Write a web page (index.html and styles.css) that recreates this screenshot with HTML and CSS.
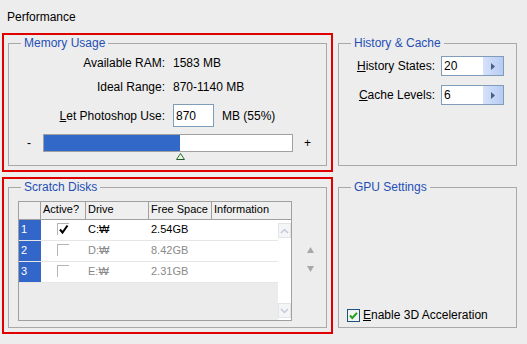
FILE: index.html
```html
<!DOCTYPE html>
<html lang="en">
<head>
    <meta charset="UTF-8">
    <title>Performance</title>
    <link rel="stylesheet" href="styles.css">
</head>
<body>
    <div class="title">Performance</div>

    <div class="panels">
        <!-- Memory Usage -->
        <div class="mark">
            <fieldset class="group">
                <legend>Memory Usage</legend>
                <div class="ram">
                    <span class="label">Available RAM:</span>
                    <span>1583 MB</span>
                    <span class="label">Ideal Range:</span>
                    <span>870-1140 MB</span>
                    <span class="label"><u>L</u>et Photoshop Use:</span>
                    <span class="use"><span class="field">870</span>MB (55%)</span>
                </div>
                <div class="slider">
                    <span class="end">-</span>
                    <div class="track">
                        <div class="fill" style="width: 136px"></div>
                        <svg class="thumb" width="9" height="7" viewBox="0 0 9 7">
                            <polygon points="4.5,0.5 8.5,6.5 0.5,6.5" fill="#e6f3e6" stroke="#2e6b35"/>
                            <line x1="1" y1="6.5" x2="8" y2="6.5" stroke="#1f5a26"/>
                        </svg>
                    </div>
                    <span class="end plus">+</span>
                </div>
            </fieldset>
        </div>

        <!-- History & Cache -->
        <div class="side">
            <fieldset class="group">
                <legend>History &amp; Cache</legend>
                <div class="levels">
                    <span class="label"><u>H</u>istory States:</span>
                    <div class="spin"><span>20</span><span class="spin-btn"><svg width="4" height="7" viewBox="0 0 4 7"><polygon points="0,0 4,3.5 0,7" fill="#4a5f86"/></svg></span></div>
                    <span class="label"><u>C</u>ache Levels:</span>
                    <div class="spin"><span>6</span><span class="spin-btn"><svg width="4" height="7" viewBox="0 0 4 7"><polygon points="0,0 4,3.5 0,7" fill="#4a5f86"/></svg></span></div>
                </div>
            </fieldset>
        </div>

        <!-- Scratch Disks -->
        <div class="mark">
            <fieldset class="group scratch">
                <legend>Scratch Disks</legend>
                <div class="disks">
                    <div class="head">
                        <span></span>
                        <span>Active?</span>
                        <span>Drive</span>
                        <span>Free Space</span>
                        <span>Information</span>
                    </div>
                    <div class="body">
                        <div class="rows">
                            <div class="row">
                                <span class="num">1</span>
                                <span><i class="tick"><svg width="11" height="11" viewBox="0 0 11 11"><path d="M2 5.5 L4.5 8.5 L9.5 1.5" fill="none" stroke="#000" stroke-width="2"/></svg></i></span>
                                <span>C:₩</span>
                                <span>2.54GB</span>
                                <span></span>
                            </div>
                            <div class="row off">
                                <span class="num">2</span>
                                <span><i class="tick"></i></span>
                                <span>D:₩</span>
                                <span>8.42GB</span>
                                <span></span>
                            </div>
                            <div class="row off">
                                <span class="num">3</span>
                                <span><i class="tick"></i></span>
                                <span>E:₩</span>
                                <span>2.31GB</span>
                                <span></span>
                            </div>
                        </div>
                        <div class="scroll">
                            <span class="sbtn"><svg width="9" height="6" viewBox="0 0 9 6"><path d="M1 5 L4.5 1.5 L8 5" fill="none" stroke="#c4cbd6" stroke-width="1.5"/></svg></span>
                            <span class="sbtn"><svg width="9" height="6" viewBox="0 0 9 6"><path d="M1 1 L4.5 4.5 L8 1" fill="none" stroke="#c4cbd6" stroke-width="1.5"/></svg></span>
                        </div>
                    </div>
                </div>
                <div class="order">
                    <svg width="7" height="6" viewBox="0 0 7 6"><polygon points="3.5,0 7,6 0,6" fill="#a8a8a8"/></svg>
                    <svg width="7" height="6" viewBox="0 0 7 6"><polygon points="0,0 7,0 3.5,6" fill="#a8a8a8"/></svg>
                </div>
            </fieldset>
        </div>

        <!-- GPU Settings -->
        <div class="side">
            <fieldset class="group gpu">
                <legend>GPU Settings</legend>
                <label class="check">
                    <svg width="13" height="13" viewBox="0 0 13 13">
                        <rect x="0.5" y="0.5" width="12" height="12" fill="#f2f2ee" stroke="#1c5180"/>
                        <path d="M3 6.5 L5.3 9 L10 3.8" fill="none" stroke="#21a121" stroke-width="2"/>
                    </svg>
                    <span><u>E</u>nable 3D Acceleration</span>
                </label>
            </fieldset>
        </div>
    </div>
</body>
</html>
```

FILE: styles.css
```css
body {
    margin: 0;
    background-color: #ededed;
    font-family: 'Liberation Sans', Arial, sans-serif;
    font-size: 12px;
    line-height: 14px;
    color: #000;
}
.title {
    height: 33px;
    box-sizing: border-box;
    padding: 10px 0 0 7px;
}
.panels {
    display: grid;
    grid-template-columns: 331px 179px;
    grid-template-rows: 139px 157px;
    column-gap: 5px;
    row-gap: 5px;
    padding-left: 2px;
}
.mark {
    border: 2px solid #e00000;
    padding: 1px 4px 4px 4px;
    display: flex;
    flex-direction: column;
}
.side {
    padding: 3px 0 6px 0;
    display: flex;
    flex-direction: column;
}
.group {
    flex: 1;
    margin: 0;
    padding: 0;
    min-width: 0;
    border: 1px solid #a9a9a9;
}
.group legend {
    margin-left: 12px;
    padding: 0 3px;
    color: #1f4fb5;
}
.label {
    text-align: right;
}

/* memory usage */
.ram {
    display: grid;
    grid-template-columns: 156px auto;
    column-gap: 8px;
    row-gap: 10px;
    align-items: center;
    margin-top: 6px;
}
.use {
    display: flex;
    align-items: center;
}
.field {
    width: 41px;
    height: 23px;
    box-sizing: border-box;
    border: 1px solid #7f9db9;
    background: #fff;
    padding: 4px 0 0 2px;
    margin-right: 8px;
}
.slider {
    display: flex;
    align-items: center;
    margin: 7px 0 0 18px;
}
.track {
    position: relative;
    width: 250px;
    height: 18px;
    box-sizing: border-box;
    margin-left: 12px;
    border: 1px solid #a0a0a0;
    background: #fff;
}
.fill {
    height: 100%;
    background-color: #3268c8;
}
.thumb {
    position: absolute;
    left: 132px;
    top: 18px;
}
.plus {
    margin-left: 11px;
}

/* history & cache */
.levels {
    display: grid;
    grid-template-columns: 96px 63px;
    column-gap: 6px;
    row-gap: 9px;
    align-items: center;
    margin-top: 6px;
}
.spin {
    display: flex;
    height: 20px;
    box-sizing: border-box;
    border: 1px solid #7f9db9;
    background: #fff;
}
.spin span:first-child {
    flex: 1;
    padding: 2px 0 0 2px;
}
.spin-btn {
    width: 20px;
    display: flex;
    align-items: center;
    justify-content: center;
    background: linear-gradient(to right, #d6e2fb, #b7cbf3);
}

/* scratch disks */
.scratch {
    display: flex;
    align-items: flex-start;
}
.disks {
    width: 274px;
    height: 120px;
    box-sizing: border-box;
    margin: 7px 0 0 9px;
    border: 1px solid #a0a0a0;
    display: flex;
    flex-direction: column;
}
.head {
    display: grid;
    grid-template-columns: 22px 45px 63px 63px 1fr;
    height: 18px;
    box-sizing: border-box;
    border-bottom: 1px solid #a0a0a0;
    font-size: 11px;
    line-height: 15px;
    background: #efefef;
}
.head span {
    border-right: 1px solid #a0a0a0;
    padding-left: 2px;
    white-space: nowrap;
    overflow: hidden;
}
.head span:last-child {
    border-right: none;
}
.body {
    flex: 1;
    display: flex;
}
.rows {
    flex: 1;
    background: #ececec;
}
.row {
    display: grid;
    grid-template-columns: 22px 45px 63px 63px 1fr;
    height: 21px;
    box-sizing: border-box;
    border-bottom: 1px solid #e6e6e6;
    background: #fff;
    font-size: 11px;
    line-height: 18px;
}
.row span {
    padding-left: 2px;
}
.row .num {
    background-color: #3366c9;
    color: #fff;
}
.row.off {
    color: #8a8a8a;
}
.tick {
    display: block;
    width: 12px;
    height: 12px;
    box-sizing: border-box;
    margin: 3px 0 0 14px;
    border-top: 1px solid #b4b4b4;
    border-left: 1px solid #b4b4b4;
}
.tick svg {
    display: block;
}
.scroll {
    width: 13px;
    background: #fff;
    display: flex;
    flex-direction: column;
    justify-content: space-between;
    padding: 3px 0 2px 0;
}
.sbtn {
    height: 13px;
    display: flex;
    align-items: center;
    justify-content: center;
    border: 1px solid #e2e4e8;
    background: #f4f5f7;
}
.order {
    display: flex;
    flex-direction: column;
    gap: 13px;
    margin: 53px 0 0 15px;
}

/* gpu */
.gpu {
    display: flex;
    flex-direction: column;
}
.check {
    margin: auto 0 5px 8px;
    display: flex;
    align-items: center;
    gap: 3px;
}
.check svg {
    display: block;
}
```
